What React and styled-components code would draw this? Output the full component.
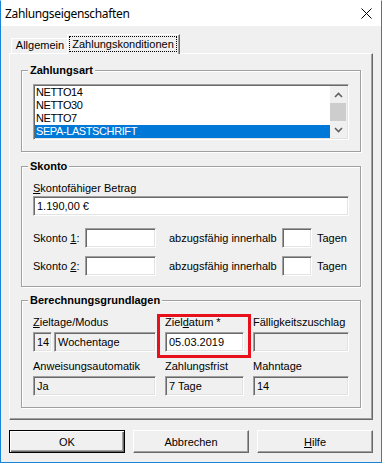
import styled, { createGlobalStyle } from 'styled-components'

const Global = createGlobalStyle`
  html, body { margin:0; padding:0; background:#fff; }
  body { font-family:"Liberation Sans", Arial, sans-serif; font-size:11px; color:#000; }
  *{ box-sizing:border-box; }
`

const Window = styled.div`
  width:382px; height:463px;
  border:1px solid #1883d7;
  border-top-color:#fff;
  display:flex; flex-direction:column;
  background:#fff;
`
const TitleBar = styled.div`
  height:25px; flex:none;
  display:flex; align-items:center; justify-content:space-between;
  padding:0 9px 0 4px;
  font-family:"Noto Sans","Open Sans",sans-serif; font-size:12px;
  letter-spacing:-0.35px;
`
const Client = styled.div`
  flex:1; background:#f0f0f0;
  padding:8px 8px 9px 8px;
  display:flex; flex-direction:column;
`
const TabStrip = styled.div`
  height:19px; flex:none;
  display:flex; align-items:flex-end;
  padding-left:2px;
  position:relative; z-index:1;
`
const Tab = styled.div`
  height:${p=>p.$active?20:15}px;
  width:${p=>p.$w}px;
  margin-left:${p=>p.$active?-2:0}px;
  margin-bottom:${p=>p.$active?-1:0}px;
  background:#f0f0f0;
  border:1px solid; border-bottom:none;
  border-color:#fff #696969 transparent #fff;
  box-shadow:inset -1px 0 0 #a0a0a0;
  display:flex; align-items:center; justify-content:center;
  padding:${p=>p.$active?'1px 2px 2px 1px':'0 4px 1px'};
  line-height:13px;
`
const Focus = styled.span`
  flex:1; height:100%;
  border:1px dotted #000;
  display:flex; align-items:center; justify-content:center;
`
const Panel = styled.div`
  flex:1;
  border:1px solid; border-color:#fff #696969 #696969 #fff;
  box-shadow:inset -1px -1px 0 #a0a0a0;
  padding:16px 11px 0 11px;
  display:flex; flex-direction:column;
`
const Group = styled.div`
  margin-top:${p=>p.$mt||0}px;
  border:1px solid #a0a0a0;
  box-shadow:inset 1px 1px 0 #fff, 1px 1px 0 #fff;
  padding:0 11px ${p=>p.$pb}px 11px;
  display:flex; flex-direction:column;
`
const Legend = styled.div`
  align-self:flex-start;
  margin:-7px 0 0 -5px;
  padding:0 2px;
  background:#f0f0f0;
  font-weight:bold; line-height:13px;
`
const Label = styled.div`
  line-height:13px; white-space:nowrap;
  margin-top:${p=>p.$mt||0}px;
`
const Field = styled.div`
  height:20px;
  width:${p=>p.$w?p.$w+'px':'100%'};
  flex:none;
  margin-top:${p=>p.$mt||0}px;
  background:${p=>p.$ro?'#f0f0f0':'#fff'};
  border:1px solid; border-color:#a0a0a0 #fff #fff #a0a0a0;
  box-shadow:inset 1px 1px 0 #696969, inset -1px -1px 0 #e3e3e3;
  padding:0 3px;
  display:flex; align-items:center;
  white-space:nowrap; overflow:hidden;
`
const ListBox = styled.div`
  margin-top:7px;
  height:56px;
  border:1px solid; border-color:#a0a0a0 #fff #fff #a0a0a0;
  box-shadow:inset 1px 1px 0 #696969, inset -1px -1px 0 #e3e3e3;
  padding:1px;
  display:flex; background:#fff;
`
const Items = styled.div`flex:1; display:flex; flex-direction:column;`
const Item = styled.div`
  height:13px; line-height:13px; padding-left:1px;
  letter-spacing:-0.4px;
  background:${p=>p.$sel?'#0078d7':'transparent'};
  color:${p=>p.$sel?'#fff':'#000'};
`
const ScrollBar = styled.div`
  width:17px; background:#f0f0f0;
  display:flex; flex-direction:column;
`
const Arrow = styled.div`
  height:17px; display:flex; align-items:center; justify-content:center;
`
const Thumb = styled.div`height:18px; margin:0 1px 0 0; background:#cdcdcd;`
const Row = styled.div`
  display:flex; align-items:center;
  margin-top:${p=>p.$mt}px;
`
const RowLabel = styled.div`width:${p=>p.$w}px; margin-left:${p=>p.$ml||0}px; line-height:13px; white-space:nowrap;`
const Grid = styled.div`
  display:grid;
  grid-template-columns:123px 79px 96px;
  column-gap:9px;
  margin-top:${p=>p.$mt}px;
`
const Cell = styled.div`
  position:relative;
  display:flex; flex-direction:column;
`
const Highlight = styled.div`
  position:absolute;
  top:-2px; left:-8px; right:-7px; bottom:-6px;
  border:3px solid #e8111b;
  pointer-events:none;
`
const Split = styled.div`display:flex; gap:2px; margin-top:3px;`
const ButtonRow = styled.div`
  margin-top:10px; flex:none;
  display:flex; gap:8px;
`
const Button = styled.div`
  width:116px; height:23px;
  background:#f0f0f0;
  border:1px solid;
  border-color:${p=>p.$def?'#000':'#fff #696969 #696969 #fff'};
  box-shadow:${p=>p.$def
    ?'inset 1px 1px 0 #fff, inset -1px -1px 0 #696969, inset -2px -2px 0 #a0a0a0'
    :'inset -1px -1px 0 #a0a0a0'};
  display:flex; align-items:center; justify-content:center;
`

function Chevron({up}){
  return (
    <svg width="9" height="6" viewBox="0 0 9 6">
      <polyline points={up?'1,5 4.5,1.5 8,5':'1,1 4.5,4.5 8,1'} fill="none" stroke="#606060" strokeWidth="1.6"/>
    </svg>
  )
}

export default function App(){
  return (
    <>
      <Global/>
      <Window>
        <TitleBar>
          <span>Zahlungseigenschaften</span>
          <svg width="11" height="11" viewBox="0 0 11 11">
            <path d="M0.5 0.5 L10.5 10.5 M10.5 0.5 L0.5 10.5" stroke="#000" strokeWidth="1"/>
          </svg>
        </TitleBar>
        <Client>
          <TabStrip>
            <Tab $w={58}>Allgemein</Tab>
            <Tab $active $w={113}><Focus>Zahlungskonditionen</Focus></Tab>
          </TabStrip>
          <Panel>
            <Group $pb={11}>
              <Legend>Zahlungsart</Legend>
              <ListBox>
                <Items>
                  <Item>NETTO14</Item>
                  <Item>NETTO30</Item>
                  <Item>NETTO7</Item>
                  <Item $sel>SEPA-LASTSCHRIFT</Item>
                </Items>
                <ScrollBar>
                  <Arrow><Chevron up/></Arrow>
                  <Thumb/>
                  <Arrow><Chevron/></Arrow>
                </ScrollBar>
              </ListBox>
            </Group>

            <Group $mt={14} $pb={10}>
              <Legend>Skonto</Legend>
              <Label $mt={9}><u>S</u>kontofähiger Betrag</Label>
              <Field $mt={1}>1.190,00 €</Field>
              <Row $mt={12}>
                <RowLabel $w={52}>Skonto <u>1</u>:</RowLabel>
                <Field $w={71}/>
                <RowLabel $w={113} $ml={13}>abzugsfähig innerhalb</RowLabel>
                <Field $w={30}/>
                <RowLabel $w={30} $ml={5}>Tagen</RowLabel>
              </Row>
              <Row $mt={8}>
                <RowLabel $w={52}>Skonto <u>2</u>:</RowLabel>
                <Field $w={71}/>
                <RowLabel $w={113} $ml={13}>abzugsfähig innerhalb</RowLabel>
                <Field $w={30}/>
                <RowLabel $w={30} $ml={5}>Tagen</RowLabel>
              </Row>
            </Group>

            <Group $mt={13} $pb={11}>
              <Legend>Berechnungsgrundlagen</Legend>
              <Grid $mt={9}>
                <Cell>
                  <Label><u>Z</u>ieltage/Modus</Label>
                  <Split>
                    <Field $ro $w={19}>14</Field>
                    <Field $ro style={{flex:1}}>Wochentage</Field>
                  </Split>
                </Cell>
                <Cell>
                  <Label>Ziel<u>d</u>atum *</Label>
                  <Field $mt={3}>05.03.2019</Field>
                  <Highlight/>
                </Cell>
                <Cell>
                  <Label>Fälligkeitszuschlag</Label>
                  <Field $ro $mt={3}/>
                </Cell>
              </Grid>
              <Grid $mt={8}>
                <Cell>
                  <Label>Anweisungsautomatik</Label>
                  <Field $ro $mt={3}>Ja</Field>
                </Cell>
                <Cell>
                  <Label>Zahlungsfrist</Label>
                  <Field $ro $mt={3}>7 Tage</Field>
                </Cell>
                <Cell>
                  <Label>Mahntage</Label>
                  <Field $ro $mt={3}>14</Field>
                </Cell>
              </Grid>
            </Group>
          </Panel>
          <ButtonRow>
            <Button $def>OK</Button>
            <Button>Abbrechen</Button>
            <Button><u>H</u>ilfe</Button>
          </ButtonRow>
        </Client>
      </Window>
    </>
  )
}
